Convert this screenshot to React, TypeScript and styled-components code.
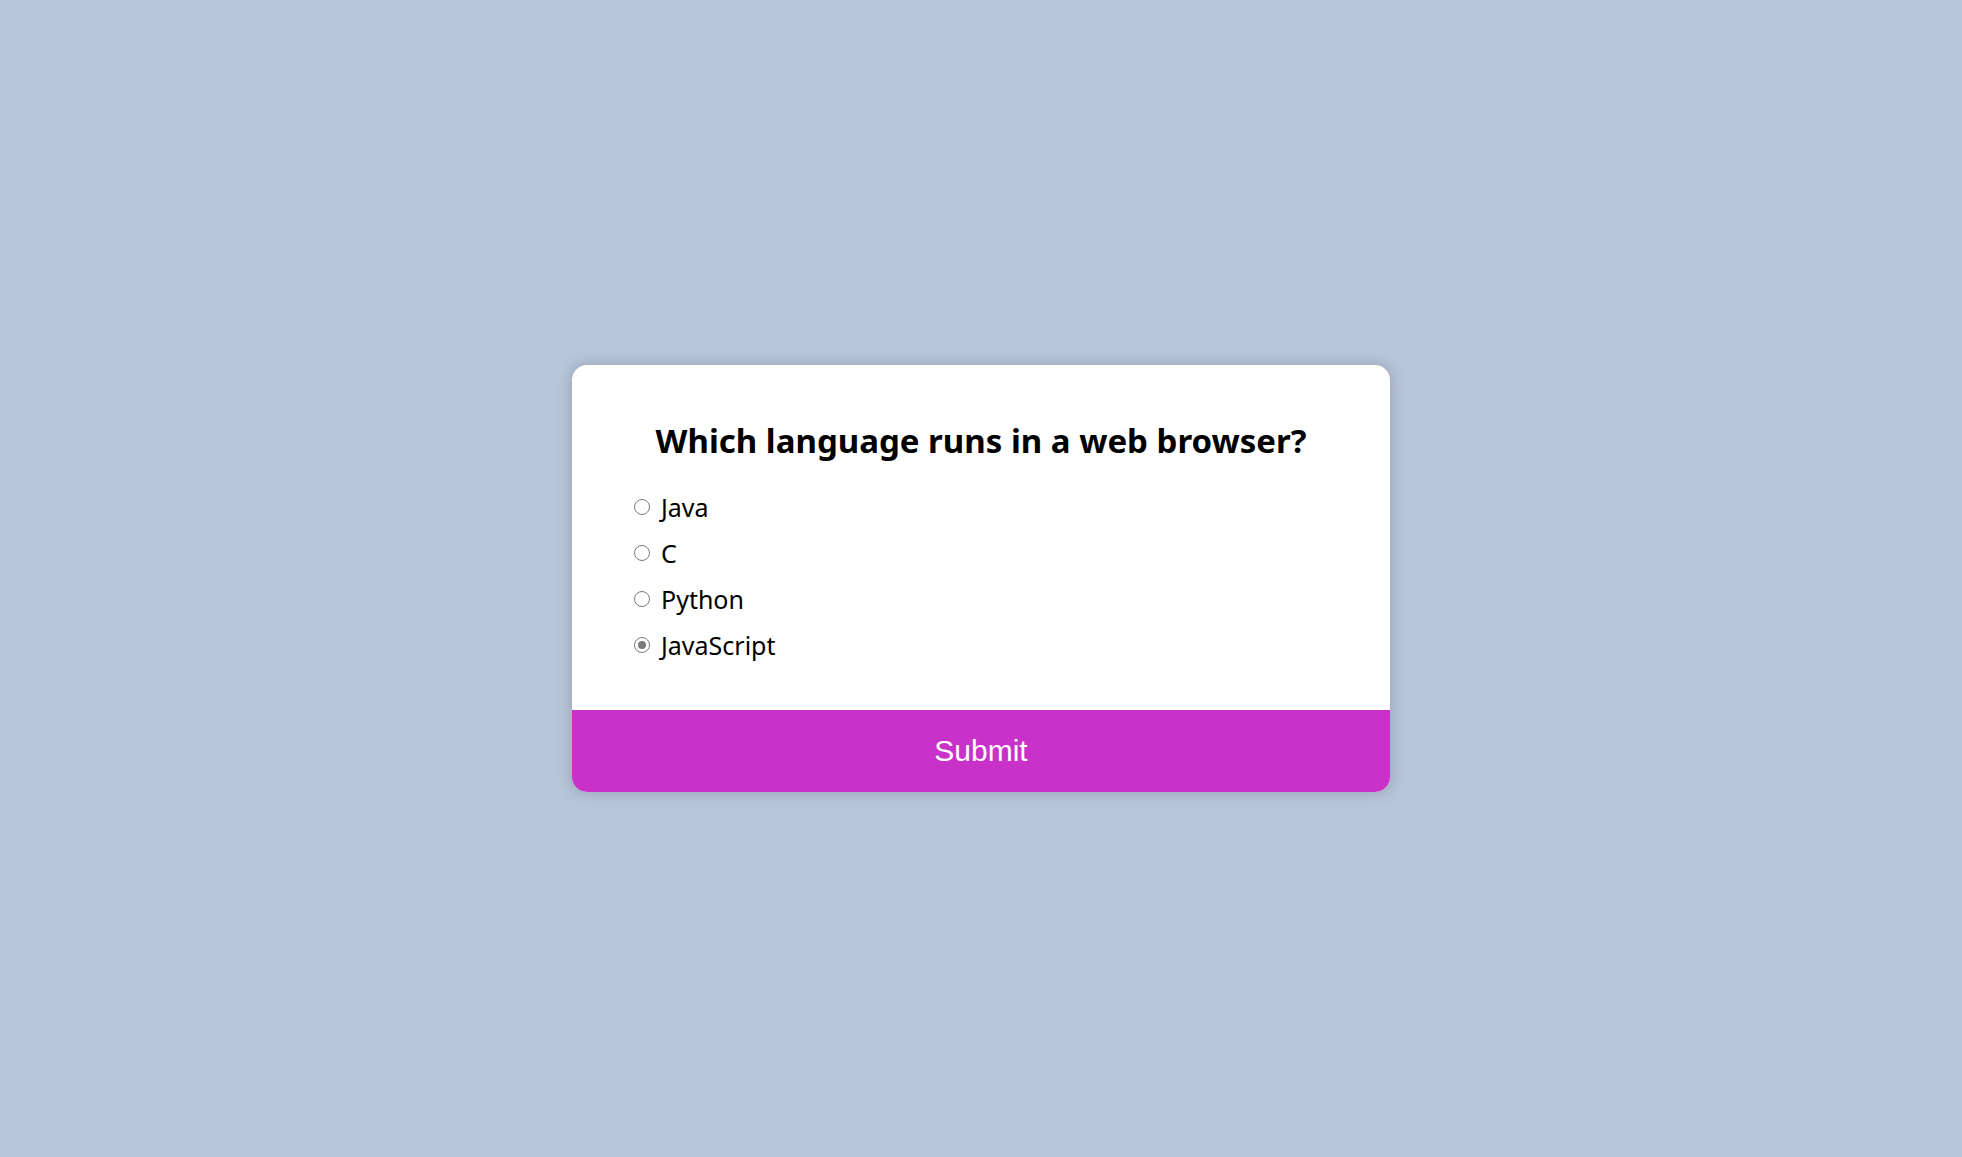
import React, { useState } from 'react';
import styled, { createGlobalStyle } from 'styled-components';

const GlobalStyle = createGlobalStyle`
  * {
    box-sizing: border-box;
  }
  body {
    margin: 0;
    background-color: #b8c6db;
    font-family: 'Noto Sans', 'Open Sans', sans-serif;
  }
`;

const answers = ['Java', 'C', 'Python', 'JavaScript'];

export default function App() {
  const [selected, setSelected] = useState('JavaScript');

  return (
    <Page>
      <GlobalStyle />
      <QuizCard>
        <QuizHeader>
          <Question>Which language runs in a web browser?</Question>
          <AnswerList>
            {answers.map((answer) => (
              <AnswerItem key={answer}>
                <Radio
                  type="radio"
                  name="answer"
                  id={answer}
                  checked={selected === answer}
                  onChange={() => setSelected(answer)}
                />
                <AnswerLabel htmlFor={answer}>{answer}</AnswerLabel>
              </AnswerItem>
            ))}
          </AnswerList>
        </QuizHeader>
        <SubmitButton>Submit</SubmitButton>
      </QuizCard>
    </Page>
  );
}

const Page = styled.div`
  display: flex;
  align-items: center;
  justify-content: center;
  height: 100vh;
`;

const QuizCard = styled.div`
  width: 818px;
  background-color: #fff;
  border-radius: 15px;
  box-shadow: 0 0 12px 3px rgba(100, 100, 100, 0.28);
  overflow: hidden;
`;

const QuizHeader = styled.div`
  height: 345px;
  padding: 56px 62px 0 62px;
`;

const Question = styled.h2`
  margin: 0;
  font-size: 33px;
  font-weight: 700;
  line-height: 40px;
  text-align: center;
  color: #000;
`;

const AnswerList = styled.ul`
  list-style: none;
  margin: 23px 0 0 0;
  padding: 0;
`;

const AnswerItem = styled.li`
  display: flex;
  align-items: center;
  height: 46px;
`;

const Radio = styled.input`
  appearance: none;
  width: 16px;
  height: 16px;
  margin: 0 11px 0 0;
  border: 1px solid #7a7a7a;
  border-radius: 50%;
  background-color: #fff;
  display: grid;
  place-items: center;

  &::after {
    content: '';
    width: 8px;
    height: 8px;
    border-radius: 50%;
    background-color: #7a7a7a;
    transform: scale(0);
  }

  &:checked::after {
    transform: scale(1);
  }
`;

const AnswerLabel = styled.label`
  font-size: 25px;
  color: #000;
  cursor: pointer;
`;

const SubmitButton = styled.button`
  display: block;
  width: 100%;
  height: 82px;
  border: none;
  background-color: #c832c8;
  color: #fff;
  font-family: 'Liberation Sans', Arial, sans-serif;
  font-size: 30px;
  cursor: pointer;
`;
